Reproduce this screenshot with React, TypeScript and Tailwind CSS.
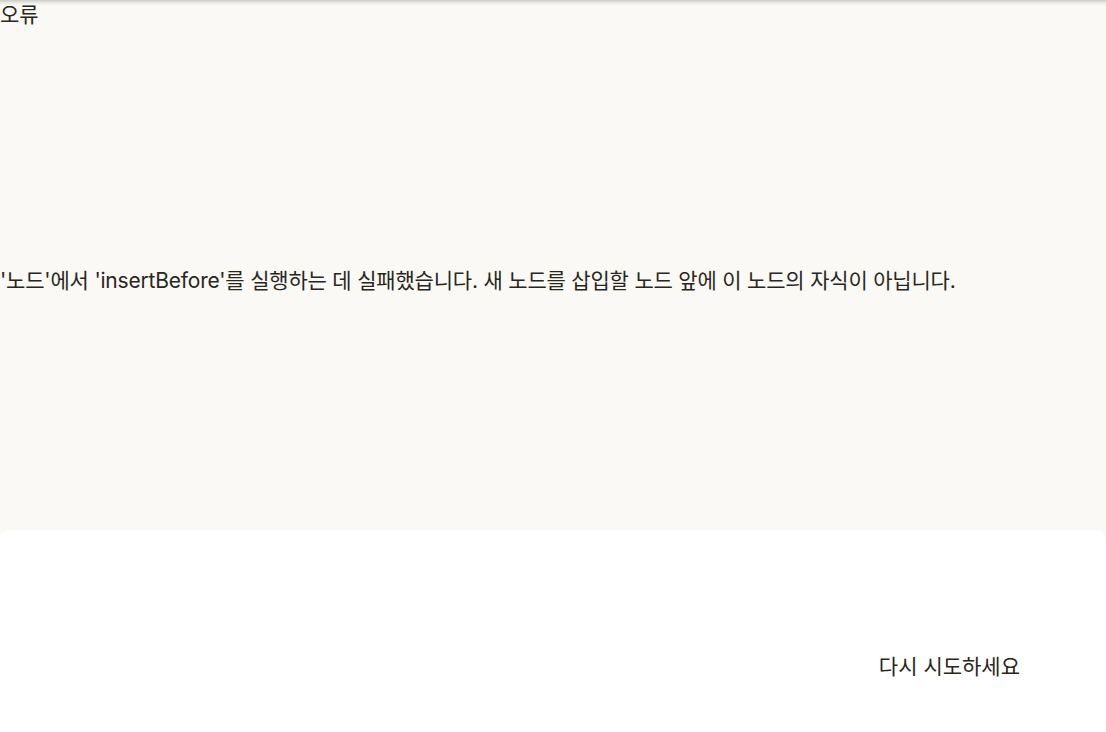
import React from "react";

const font = { fontFamily: "Inter, 'Noto Sans CJK KR', sans-serif" };

export default function App() {
  return (
    <div
      className="w-[1106px] h-[732px] flex flex-col bg-[#faf9f6] text-[#29261b] overflow-hidden"
      style={font}
    >
      <div className="h-[530px] flex flex-col shadow-[inset_0_6px_5px_-5px_rgba(0,0,0,0.28)]">
        <h1 className="text-[21px] leading-[30px]">오류</h1>
        <div className="flex-1 flex items-center pt-[2px]">
          <p className="text-[21px] leading-[30px] tracking-[-0.2px]">
            '노드'에서 'insertBefore'를 실행하는 데 실패했습니다. 새 노드를 삽입할 노드 앞에 이 노드의 자식이 아닙니다.
          </p>
        </div>
      </div>
      <div className="flex-1 bg-white rounded-t-[10px] flex items-center justify-end pr-[86px]">
        <button className="text-[21px] leading-[30px] text-[#29261b] mt-[72px]">다시 시도하세요</button>
      </div>
    </div>
  );
}
